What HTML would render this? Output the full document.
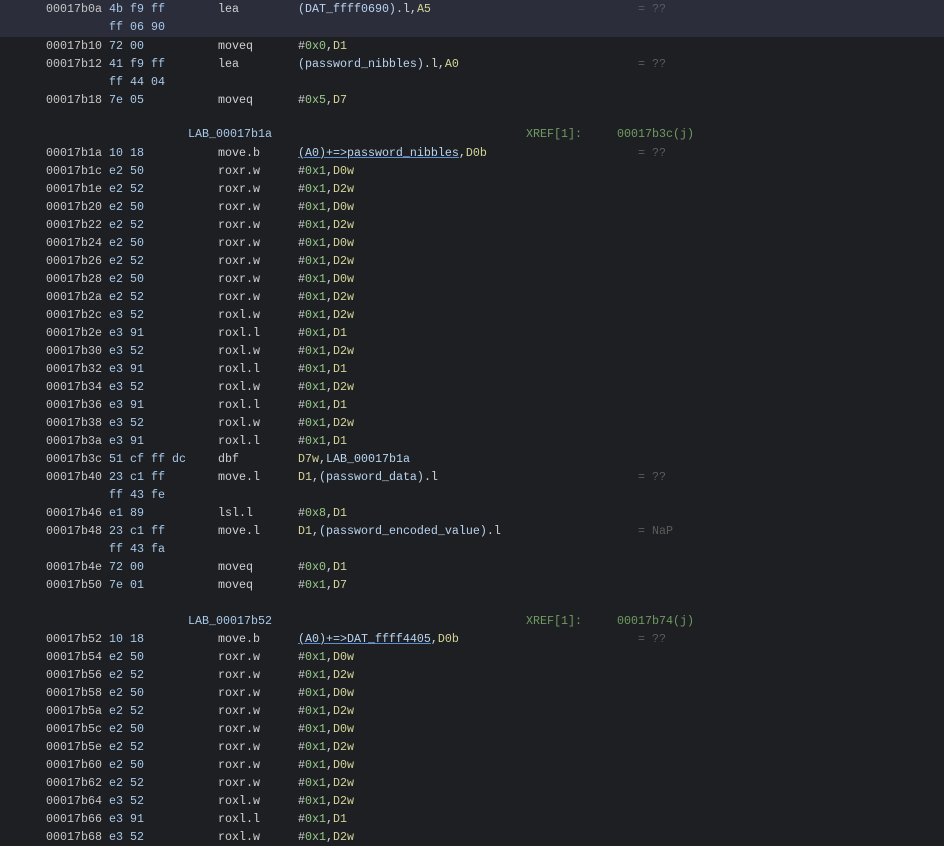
<!DOCTYPE html>
<html><head><meta charset="utf-8"><style>
body{margin:0;background:#1e1f22;width:944px;height:836px;overflow:hidden;font-family:"Liberation Mono",monospace;font-size:11.67px;}
.hl{position:absolute;left:0;top:0;width:944px;height:37px;background:#2b2d3b}
.row{position:absolute;left:0;height:18px;line-height:18px;width:944px;white-space:pre}
.row span{position:absolute;top:0}
.a{left:46px;color:#c6c6c6}.b{left:109px;color:#a8c9ea}.m{left:218px;color:#d0d0d0}.o{left:298px;color:#d0d0d0}
.c{left:638px;color:#5c5c5c}.lab{left:188px;color:#a8c9ea}.xr{left:526px;color:#6f9a62}.xt{left:617px;color:#6f9a62}
i{font-style:normal}.r{color:#d4d49a}.h{color:#98c98a}.l{color:#b8d4f0}.u{text-decoration:underline;text-decoration-color:#5a8fd8}
</style></head><body>
<div class="hl"></div>
<div class="row" style="top:0"><span class="a">00017b0a</span><span class="b">4b f9 ff</span><span class="m">lea</span><span class="o"><i class="l">(DAT_ffff0690)</i>.l,<i class="r">A5</i></span><span class="c">= ??</span></div>
<div class="row" style="top:18px"><span class="b">ff 06 90</span></div>
<div class="row" style="top:37px"><span class="a">00017b10</span><span class="b">72 00</span><span class="m">moveq</span><span class="o">#<i class="h">0x0</i>,<i class="r">D1</i></span></div>
<div class="row" style="top:55px"><span class="a">00017b12</span><span class="b">41 f9 ff</span><span class="m">lea</span><span class="o"><i class="l">(password_nibbles)</i>.l,<i class="r">A0</i></span><span class="c">= ??</span></div>
<div class="row" style="top:73px"><span class="b">ff 44 04</span></div>
<div class="row" style="top:91px"><span class="a">00017b18</span><span class="b">7e 05</span><span class="m">moveq</span><span class="o">#<i class="h">0x5</i>,<i class="r">D7</i></span></div>
<div class="row" style="top:125px"><span class="lab">LAB_00017b1a</span><span class="xr">XREF[1]:</span><span class="xt">00017b3c(j)</span></div>
<div class="row" style="top:144px"><span class="a">00017b1a</span><span class="b">10 18</span><span class="m">move.b</span><span class="o"><i class="u"><i class="l">(A0)+=&gt;password_nibbles</i></i>,<i class="r">D0b</i></span><span class="c">= ??</span></div>
<div class="row" style="top:162px"><span class="a">00017b1c</span><span class="b">e2 50</span><span class="m">roxr.w</span><span class="o">#<i class="h">0x1</i>,<i class="r">D0w</i></span></div>
<div class="row" style="top:180px"><span class="a">00017b1e</span><span class="b">e2 52</span><span class="m">roxr.w</span><span class="o">#<i class="h">0x1</i>,<i class="r">D2w</i></span></div>
<div class="row" style="top:198px"><span class="a">00017b20</span><span class="b">e2 50</span><span class="m">roxr.w</span><span class="o">#<i class="h">0x1</i>,<i class="r">D0w</i></span></div>
<div class="row" style="top:216px"><span class="a">00017b22</span><span class="b">e2 52</span><span class="m">roxr.w</span><span class="o">#<i class="h">0x1</i>,<i class="r">D2w</i></span></div>
<div class="row" style="top:234px"><span class="a">00017b24</span><span class="b">e2 50</span><span class="m">roxr.w</span><span class="o">#<i class="h">0x1</i>,<i class="r">D0w</i></span></div>
<div class="row" style="top:252px"><span class="a">00017b26</span><span class="b">e2 52</span><span class="m">roxr.w</span><span class="o">#<i class="h">0x1</i>,<i class="r">D2w</i></span></div>
<div class="row" style="top:270px"><span class="a">00017b28</span><span class="b">e2 50</span><span class="m">roxr.w</span><span class="o">#<i class="h">0x1</i>,<i class="r">D0w</i></span></div>
<div class="row" style="top:288px"><span class="a">00017b2a</span><span class="b">e2 52</span><span class="m">roxr.w</span><span class="o">#<i class="h">0x1</i>,<i class="r">D2w</i></span></div>
<div class="row" style="top:306px"><span class="a">00017b2c</span><span class="b">e3 52</span><span class="m">roxl.w</span><span class="o">#<i class="h">0x1</i>,<i class="r">D2w</i></span></div>
<div class="row" style="top:324px"><span class="a">00017b2e</span><span class="b">e3 91</span><span class="m">roxl.l</span><span class="o">#<i class="h">0x1</i>,<i class="r">D1</i></span></div>
<div class="row" style="top:342px"><span class="a">00017b30</span><span class="b">e3 52</span><span class="m">roxl.w</span><span class="o">#<i class="h">0x1</i>,<i class="r">D2w</i></span></div>
<div class="row" style="top:360px"><span class="a">00017b32</span><span class="b">e3 91</span><span class="m">roxl.l</span><span class="o">#<i class="h">0x1</i>,<i class="r">D1</i></span></div>
<div class="row" style="top:378px"><span class="a">00017b34</span><span class="b">e3 52</span><span class="m">roxl.w</span><span class="o">#<i class="h">0x1</i>,<i class="r">D2w</i></span></div>
<div class="row" style="top:396px"><span class="a">00017b36</span><span class="b">e3 91</span><span class="m">roxl.l</span><span class="o">#<i class="h">0x1</i>,<i class="r">D1</i></span></div>
<div class="row" style="top:414px"><span class="a">00017b38</span><span class="b">e3 52</span><span class="m">roxl.w</span><span class="o">#<i class="h">0x1</i>,<i class="r">D2w</i></span></div>
<div class="row" style="top:432px"><span class="a">00017b3a</span><span class="b">e3 91</span><span class="m">roxl.l</span><span class="o">#<i class="h">0x1</i>,<i class="r">D1</i></span></div>
<div class="row" style="top:450px"><span class="a">00017b3c</span><span class="b">51 cf ff dc</span><span class="m">dbf</span><span class="o"><i class="r">D7w</i>,<i class="l">LAB_00017b1a</i></span></div>
<div class="row" style="top:468px"><span class="a">00017b40</span><span class="b">23 c1 ff</span><span class="m">move.l</span><span class="o"><i class="r">D1</i>,<i class="l">(password_data)</i>.l</span><span class="c">= ??</span></div>
<div class="row" style="top:486px"><span class="b">ff 43 fe</span></div>
<div class="row" style="top:504px"><span class="a">00017b46</span><span class="b">e1 89</span><span class="m">lsl.l</span><span class="o">#<i class="h">0x8</i>,<i class="r">D1</i></span></div>
<div class="row" style="top:522px"><span class="a">00017b48</span><span class="b">23 c1 ff</span><span class="m">move.l</span><span class="o"><i class="r">D1</i>,<i class="l">(password_encoded_value)</i>.l</span><span class="c">= NaP</span></div>
<div class="row" style="top:540px"><span class="b">ff 43 fa</span></div>
<div class="row" style="top:558px"><span class="a">00017b4e</span><span class="b">72 00</span><span class="m">moveq</span><span class="o">#<i class="h">0x0</i>,<i class="r">D1</i></span></div>
<div class="row" style="top:576px"><span class="a">00017b50</span><span class="b">7e 01</span><span class="m">moveq</span><span class="o">#<i class="h">0x1</i>,<i class="r">D7</i></span></div>
<div class="row" style="top:612px"><span class="lab">LAB_00017b52</span><span class="xr">XREF[1]:</span><span class="xt">00017b74(j)</span></div>
<div class="row" style="top:630px"><span class="a">00017b52</span><span class="b">10 18</span><span class="m">move.b</span><span class="o"><i class="u"><i class="l">(A0)+=&gt;DAT_ffff4405</i></i>,<i class="r">D0b</i></span><span class="c">= ??</span></div>
<div class="row" style="top:648px"><span class="a">00017b54</span><span class="b">e2 50</span><span class="m">roxr.w</span><span class="o">#<i class="h">0x1</i>,<i class="r">D0w</i></span></div>
<div class="row" style="top:666px"><span class="a">00017b56</span><span class="b">e2 52</span><span class="m">roxr.w</span><span class="o">#<i class="h">0x1</i>,<i class="r">D2w</i></span></div>
<div class="row" style="top:684px"><span class="a">00017b58</span><span class="b">e2 50</span><span class="m">roxr.w</span><span class="o">#<i class="h">0x1</i>,<i class="r">D0w</i></span></div>
<div class="row" style="top:702px"><span class="a">00017b5a</span><span class="b">e2 52</span><span class="m">roxr.w</span><span class="o">#<i class="h">0x1</i>,<i class="r">D2w</i></span></div>
<div class="row" style="top:720px"><span class="a">00017b5c</span><span class="b">e2 50</span><span class="m">roxr.w</span><span class="o">#<i class="h">0x1</i>,<i class="r">D0w</i></span></div>
<div class="row" style="top:738px"><span class="a">00017b5e</span><span class="b">e2 52</span><span class="m">roxr.w</span><span class="o">#<i class="h">0x1</i>,<i class="r">D2w</i></span></div>
<div class="row" style="top:756px"><span class="a">00017b60</span><span class="b">e2 50</span><span class="m">roxr.w</span><span class="o">#<i class="h">0x1</i>,<i class="r">D0w</i></span></div>
<div class="row" style="top:774px"><span class="a">00017b62</span><span class="b">e2 52</span><span class="m">roxr.w</span><span class="o">#<i class="h">0x1</i>,<i class="r">D2w</i></span></div>
<div class="row" style="top:792px"><span class="a">00017b64</span><span class="b">e3 52</span><span class="m">roxl.w</span><span class="o">#<i class="h">0x1</i>,<i class="r">D2w</i></span></div>
<div class="row" style="top:810px"><span class="a">00017b66</span><span class="b">e3 91</span><span class="m">roxl.l</span><span class="o">#<i class="h">0x1</i>,<i class="r">D1</i></span></div>
<div class="row" style="top:828px"><span class="a">00017b68</span><span class="b">e3 52</span><span class="m">roxl.w</span><span class="o">#<i class="h">0x1</i>,<i class="r">D2w</i></span></div>
</body></html>
